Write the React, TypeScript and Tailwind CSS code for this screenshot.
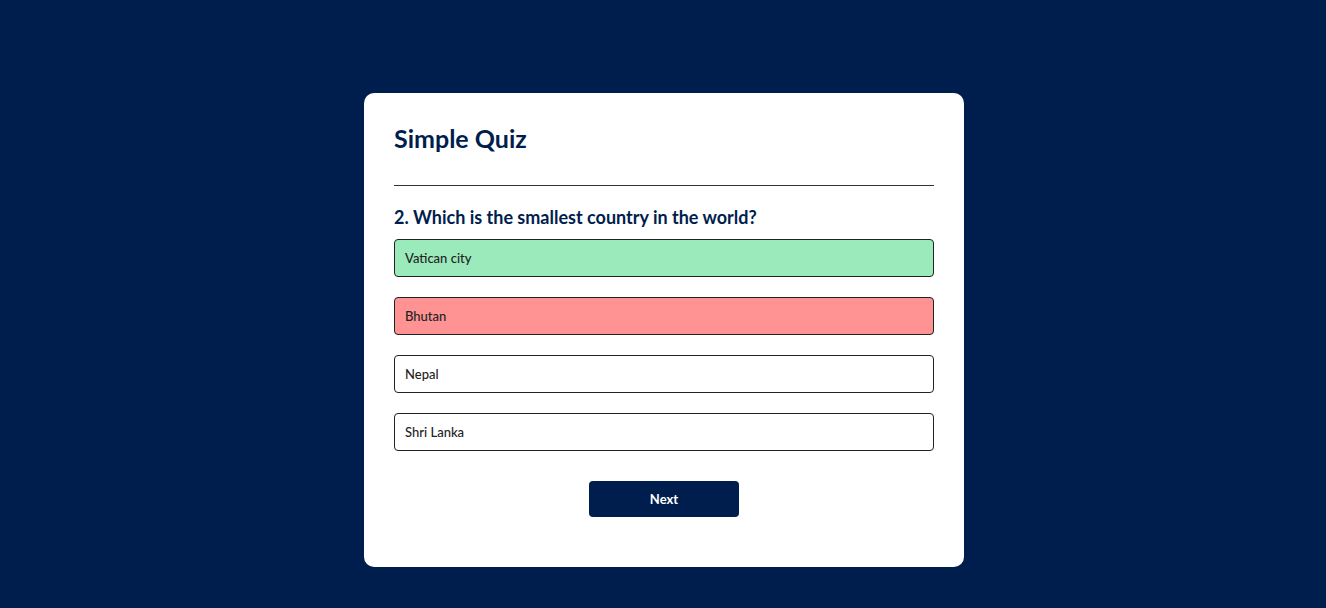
import { useState } from "react"

const answers = [
  { text: "Vatican city", state: "correct" },
  { text: "Bhutan", state: "wrong" },
  { text: "Nepal", state: "" },
  { text: "Shri Lanka", state: "" },
]

export default function App() {
  const [picked] = useState(1)

  return (
    <div className="min-h-screen w-full bg-[#001e4d] pt-[93px] pl-[2px] font-['Lato','Noto_Sans',sans-serif]">
      <div className="mx-auto w-[600px] rounded-[10px] bg-white px-[30px] pt-[30px] pb-[50px]">
        <h1 className="border-b border-[#333] pb-[31px] text-[25px] leading-[31px] font-bold text-[#001e4d]">
          Simple Quiz
        </h1>
        <div className="pt-[20px]">
          <h2 className="text-[18px] leading-[22px] font-bold text-[#001e4d]">
            2. Which is the smallest country in the world?
          </h2>
          <div className="mt-[11px] flex flex-col gap-[20px]">
            {answers.map((a, i) => (
              <button
                key={a.text}
                data-picked={i === picked}
                className={
                  "h-[38px] w-full rounded-[4px] border border-[#222] px-[10px] pt-[2px] text-left text-[13px] font-medium text-[#222] " +
                  (a.state === "correct"
                    ? "bg-[#9aeabc]"
                    : a.state === "wrong"
                      ? "bg-[#ff9393]"
                      : "bg-white")
                }
              >
                {a.text}
              </button>
            ))}
          </div>
          <button className="mx-auto mt-[30px] block h-[36px] w-[150px] rounded-[4px] bg-[#001e4d] pt-[1px] text-[13px] font-bold text-white">
            Next
          </button>
        </div>
      </div>
    </div>
  )
}
